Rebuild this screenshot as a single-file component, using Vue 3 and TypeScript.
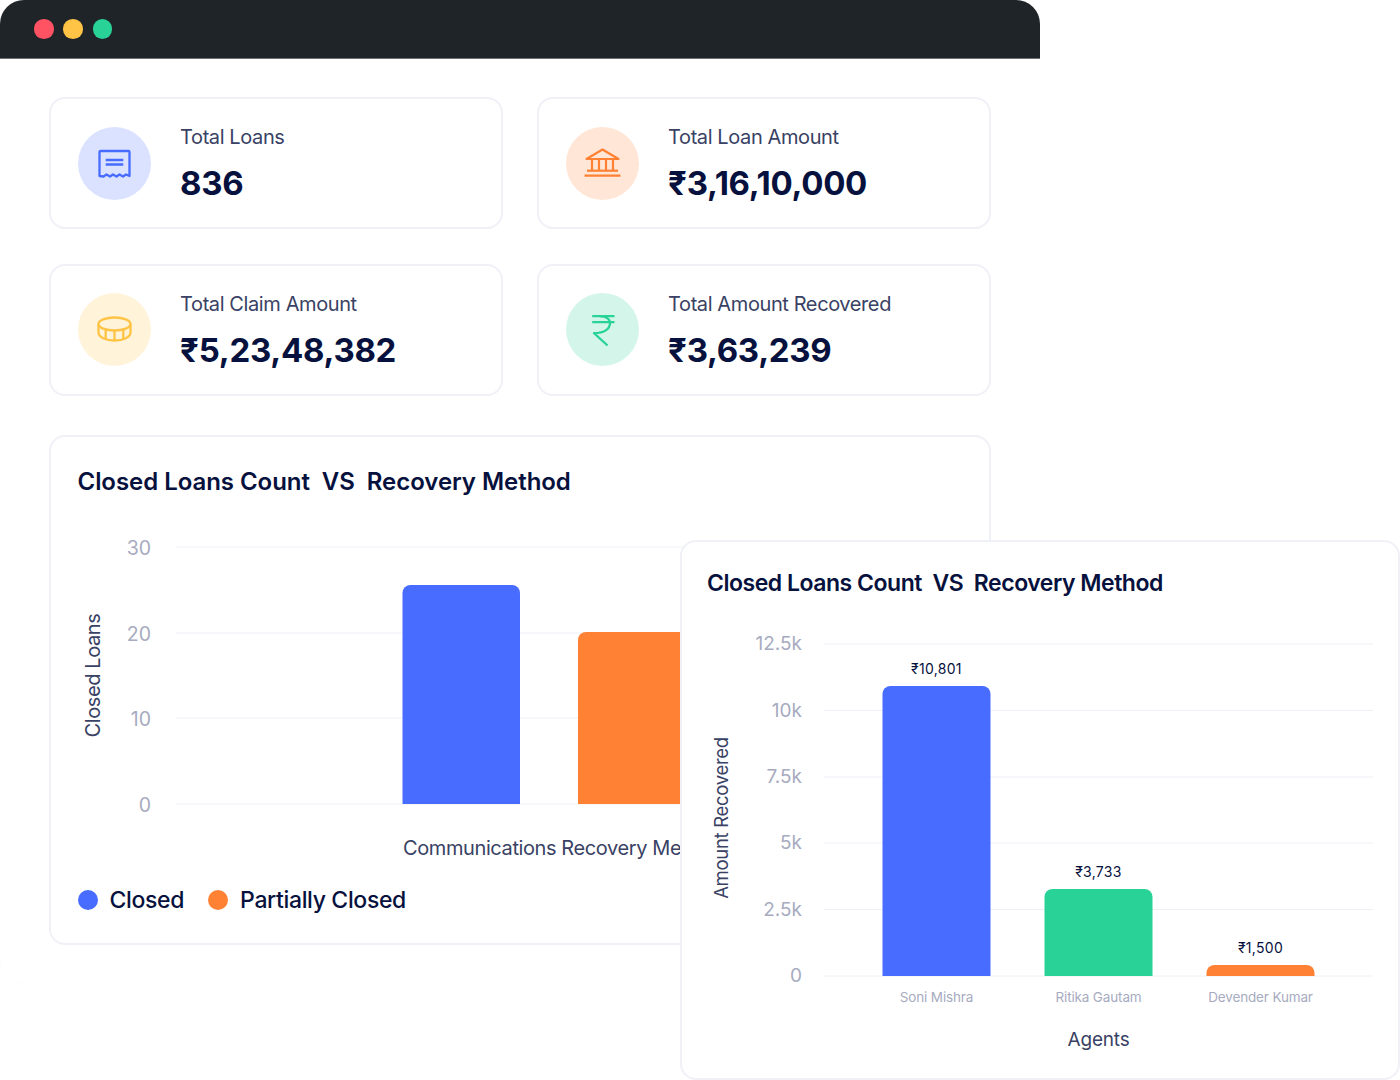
<script setup lang="ts">
const stats = [
  { label: 'Total Loans', value: '836', tone: 'blue', icon: 'receipt' },
  { label: 'Total Loan Amount', value: '₹3,16,10,000', tone: 'orange', icon: 'bank' },
  { label: 'Total Claim Amount', value: '₹5,23,48,382', tone: 'yellow', icon: 'coin' },
  { label: 'Total Amount Recovered', value: '₹3,63,239', tone: 'green', icon: 'rupee' },
]
const leftGrid = [
  { y: 547, t: '30' }, { y: 633, t: '20' }, { y: 718, t: '10' }, { y: 804, t: '0' },
]
const rightGrid = [
  { y: 644, t: '12.5k' }, { y: 710.5, t: '10k' }, { y: 777, t: '7.5k' },
  { y: 843, t: '5k' }, { y: 909.5, t: '2.5k' }, { y: 976, t: '0' },
]
const agents = [
  { x: 882.5, w: 108, y: 686, c: '#476cff', v: '₹10,801', n: 'Soni Mishra' },
  { x: 1044.5, w: 108, y: 889, c: '#29d398', v: '₹3,733', n: 'Ritika Gautam' },
  { x: 1206.5, w: 108, y: 965, c: '#ff8133', v: '₹1,500', n: 'Devender Kumar' },
]
function barPath(x: number, y: number, w: number, b: number, r: number): string {
  const rr = Math.min(r, b - y)
  return `M${x} ${b}V${y + rr}A${rr} ${rr} 0 0 1 ${x + rr} ${y}H${x + w - rr}A${rr} ${rr} 0 0 1 ${x + w} ${y + rr}V${b}Z`
}
</script>

<template>
  <div class="stage">
    <section class="window">
      <header class="titlebar">
        <span class="dot red"></span>
        <span class="dot amber"></span>
        <span class="dot mint"></span>
      </header>
      <main class="content">
        <div class="stats">
          <article v-for="s in stats" :key="s.label" class="stat">
            <div class="badge" :class="s.tone">
              <svg v-if="s.icon === 'receipt'" width="35" height="31" viewBox="0 0 35 31" fill="none" stroke="#476cff" stroke-width="2.300">
                <path d="M2.500 28V4Q2.500 3 3.500 3H31.500Q32.500 3 32.500 4V28L29 26.500 26 28.500 22.500 26.500 19.500 28.500 16 26.500 13 28.500 9.500 26.500 6.500 28.500Z" stroke-linejoin="round" />
                <path d="M8.700 12H26.300M8.700 16.500H26.300" />
              </svg>
              <svg v-else-if="s.icon === 'bank'" width="37" height="31" viewBox="0 0 37 31" fill="none" stroke="#ff8133" stroke-width="2.200">
                <path d="M2.500 11L18.500 1.500 34.500 11Z" stroke-linejoin="round" />
                <path d="M8 11V22.500M15 11V22.500M22 11V22.500M29 11V22.500" />
                <path d="M3 22.700H34" />
                <path d="M0.500 27.700H36.500" />
              </svg>
              <svg v-else-if="s.icon === 'coin'" width="35" height="27" viewBox="0 0 35 27" fill="none" stroke="#ffc445" stroke-width="2.300">
                <ellipse cx="17.500" cy="8" rx="16" ry="6.500" />
                <path d="M1.500 8V16.500C1.500 21 8.500 24.500 17.500 24.500S33.500 21 33.500 16.500V8" />
                <path d="M8.700 14V23.500M17.500 15V24.500M26.300 14V23.500" />
              </svg>
              <svg v-else width="26" height="34" viewBox="0 0 26 34" fill="none" stroke="#29d398" stroke-width="2.300">
                <path d="M3.200 3.200H25.500M3.200 9.200H25.500" />
                <path d="M11 3.200C17 3.200 21 6 21 10C21 15.500 16 20.200 5 20.200L18.500 32.500" stroke-linejoin="round" />
              </svg>
            </div>
            <div class="stat-text">
              <div class="stat-label">{{ s.label }}</div>
              <div class="stat-value">{{ s.value }}</div>
            </div>
          </article>
        </div>

        <article class="chart-card">
          <h2 class="chart-title big">Closed Loans Count&nbsp; VS&nbsp; Recovery Method</h2>
          <svg class="left-chart" width="940" height="350" viewBox="50 520 940 350">
            <line v-for="g in leftGrid" :key="g.t" x1="176" x2="990" :y1="g.y" :y2="g.y" stroke="#eff0f6" stroke-width="1" />
            <text v-for="g in leftGrid" :key="'t' + g.t" x="151" :y="g.y + 7.500" text-anchor="end" class="tick-l">{{ g.t }}</text>
            <path :d="barPath(402.500, 585, 117.500, 804, 8)" fill="#476cff" />
            <path :d="barPath(578, 632, 118, 804, 8)" fill="#ff8133" />
            <text x="403" y="855" class="axis-l">Communications Recovery Method</text>
            <text transform="translate(100 675.500) rotate(-90)" text-anchor="middle" class="axis-l">Closed Loans</text>
          </svg>
          <div class="legend">
            <span class="legend-item"><i class="swatch sw-blue"></i>Closed</span>
            <span class="legend-item"><i class="swatch sw-orange"></i>Partially Closed</span>
          </div>
        </article>
      </main>
    </section>

    <article class="float-card">
      <h2 class="chart-title small">Closed Loans Count&nbsp; VS&nbsp; Recovery Method</h2>
      <svg class="right-chart" width="717" height="470" viewBox="682 610 717 470">
        <line v-for="g in rightGrid" :key="g.t" x1="824" x2="1373" :y1="g.y" :y2="g.y" stroke="#eff0f6" stroke-width="1" />
        <text v-for="g in rightGrid" :key="'t' + g.t" x="802" :y="g.y + 6" text-anchor="end" class="tick-r">{{ g.t }}</text>
        <g v-for="a in agents" :key="a.n">
          <path :d="barPath(a.x, a.y, a.w, 976, 8)" :fill="a.c" />
          <text :x="a.x + a.w / 2" :y="a.y - 12.500" text-anchor="middle" class="val">{{ a.v }}</text>
          <text :x="a.x + a.w / 2" y="1002" text-anchor="middle" class="name">{{ a.n }}</text>
        </g>
        <text x="1098.500" y="1046" text-anchor="middle" class="axis-r">Agents</text>
        <text transform="translate(728 818) rotate(-90)" text-anchor="middle" class="axis-r-y">Amount Recovered</text>
      </svg>
    </article>
  </div>
</template>

<style scoped>
.stage {
  position: relative;
  width: 1400px;
  height: 1080px;
  overflow: hidden;
  background: #fff;
  font-family: Inter, "Noto Sans", sans-serif;
}
.window {
  width: 1040px;
  height: 983px;
  border-radius: 24px 24px 0 24px;
  background: #fff;
  box-shadow: 0 0 1px rgba(40, 50, 90, 0.05);
}
.titlebar {
  height: 58px;
  display: flex;
  align-items: center;
  gap: 9.700px;
  padding-left: 34px;
  background: #1f2429;
  border-bottom: 1px solid #6d7073;
  border-radius: 24px 24px 0 0;
}
.dot { width: 19.600px; height: 19.600px; border-radius: 50%; }
.red { background: #ff5364; }
.amber { background: #ffc445; }
.mint { background: #29d398; }
.content { padding: 38px 49px 0; }
.stats {
  display: grid;
  grid-template-columns: 454px 454px;
  grid-auto-rows: 132px;
  column-gap: 34px;
  row-gap: 34.500px;
}
.stat {
  display: flex;
  align-items: center;
  gap: 29.600px;
  box-sizing: border-box;
  padding-left: 26.500px;
  border: 2px solid #eff1f7;
  border-radius: 16px;
}
.badge {
  width: 73px;
  height: 73px;
  border-radius: 50%;
  display: flex;
  align-items: center;
  justify-content: center;
  flex: none;
}
.blue { background: #dae2ff; }
.orange { background: #ffe6d6; }
.yellow { background: #fff3da; }
.green { background: #d4f6ea; }
.stat-text { display: flex; flex-direction: column; margin-top: 3px; }
.stat-label {
  font-size: 20px;
  line-height: 24px;
  color: #394264;
  letter-spacing: -0.4px;
}
.stat-value {
  margin-top: 13px;
  font-size: 33px;
  line-height: 42px;
  font-weight: 700;
  color: #07113d;
  letter-spacing: -0.3px;
}
.chart-card {
  margin-top: 39px;
  box-sizing: border-box;
  height: 510px;
  border: 2px solid #eff1f7;
  border-radius: 16px;
  padding-left: 26.500px;
  position: relative;
}
.chart-title {
  margin: 0;
  font-weight: 600;
  color: #07113d;
  white-space: nowrap;
}
.chart-title.big {
  font-size: 24px;
  line-height: 30px;
  padding-top: 30px;
  letter-spacing: -0.05px;
}
.left-chart {
  display: block;
  margin: 23px 0 0 -27.500px;
}
.tick-l { font-size: 19.500px; fill: #a7abc0; }
.axis-l { font-size: 20px; fill: #394264; letter-spacing: -0.4px; }
.legend {
  display: flex;
  gap: 24px;
  margin-top: 15px;
}
.legend-item {
  display: flex;
  align-items: center;
  gap: 12px;
  font-size: 23px;
  line-height: 30px;
  font-weight: 500;
  color: #07113d;
  letter-spacing: -0.35px;
}
.swatch { width: 20px; height: 20px; border-radius: 50%; display: block; }
.sw-blue { background: #476cff; }
.sw-orange { background: #ff8133; }
.float-card {
  position: absolute;
  left: 680px;
  top: 540px;
  width: 720px;
  height: 540px;
  box-sizing: border-box;
  background: #fff;
  border: 2px solid #eff1f7;
  border-radius: 16px;
  overflow: hidden;
}
.chart-title.small {
  font-size: 23px;
  line-height: 30px;
  padding: 26px 0 0 25px;
  letter-spacing: -0.48px;
}
.right-chart { display: block; margin-top: 12px; }
.tick-r { font-size: 19px; fill: #a7abc0; }
.val { font-size: 14px; fill: #07113d; letter-spacing: 0.3px; }
.name { font-size: 13.500px; fill: #a7abc0; letter-spacing: -0.15px; }
.axis-r { font-size: 19px; fill: #394264; letter-spacing: -0.2px; }
.axis-r-y { font-size: 18.500px; fill: #394264; letter-spacing: -0.3px; }
</style>
